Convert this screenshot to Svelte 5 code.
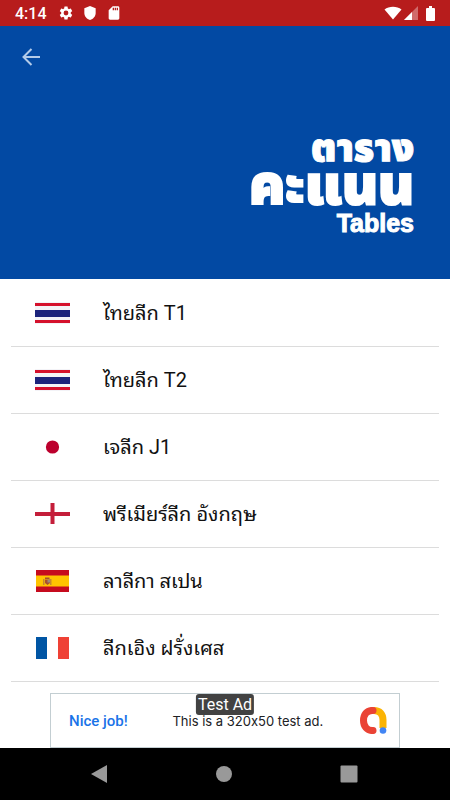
<script>
	const leagues = [
		{ name: 'ไทยลีก T1', flag: 'th' },
		{ name: 'ไทยลีก T2', flag: 'th' },
		{ name: 'เจลีก J1', flag: 'jp' },
		{ name: 'พรีเมียร์ลีก อังกฤษ', flag: 'en' },
		{ name: 'ลาลีกา สเปน', flag: 'es' },
		{ name: 'ลีกเอิง ฝรั่งเศส', flag: 'fr' }
	];
</script>

<div class="screen">
	<div class="status">
		<span class="time">4:14</span>
		<svg width="16" height="16" viewBox="0 0 24 24" fill="#fff">
			<path
				d="M19.14 12.94c.04-.3.06-.61.06-.94s-.02-.64-.07-.94l2.03-1.58a.49.49 0 0 0 .12-.61l-1.92-3.32a.49.49 0 0 0-.59-.22l-2.39.96c-.5-.38-1.03-.7-1.62-.94l-.36-2.54a.48.48 0 0 0-.48-.41h-3.84a.47.47 0 0 0-.47.41l-.36 2.54c-.59.24-1.13.57-1.62.94l-2.39-.96a.48.48 0 0 0-.59.22L2.74 8.87c-.12.21-.08.47.12.61l2.03 1.58c-.05.3-.09.63-.09.94s.02.64.07.94l-2.03 1.58a.49.49 0 0 0-.12.61l1.92 3.32c.12.22.37.29.59.22l2.39-.96c.5.38 1.03.7 1.62.94l.36 2.54c.05.24.24.41.48.41h3.84c.24 0 .44-.17.47-.41l.36-2.54c.59-.24 1.13-.56 1.62-.94l2.39.96c.22.08.47 0 .59-.22l1.92-3.32a.47.47 0 0 0-.12-.61l-2.01-1.58zM12 15.6a3.6 3.6 0 1 1 0-7.2 3.6 3.6 0 0 1 0 7.2z"
			/>
		</svg>
		<svg width="16" height="16" viewBox="0 0 24 24" fill="#fff">
			<path d="M12 1.500L3.500 5v7c0 5 3.500 9 8.500 10.500 5-1.500 8.500-5.500 8.500-10.500V5z" />
		</svg>
		<svg width="16" height="16" viewBox="0 0 24 24" fill="#fff">
			<path
				d="M18 2h-8L4 8v12c0 1.100.9 2 2 2h12c1.100 0 2-.9 2-2V4c0-1.100-.9-2-2-2zm-6 6h-2V4h2v4zm3 0h-2V4h2v4zm3 0h-2V4h2v4z"
			/>
		</svg>
		<div class="signals">
			<svg width="18" height="14" viewBox="0 0 18 14" fill="#fff">
				<path d="M9 13.500L.5 3.500C5-.3 13-.3 17.500 3.500z" />
			</svg>
			<svg width="14" height="14" viewBox="0 0 14 14" fill="#fff">
				<path d="M14 0v14H0z" opacity="0.35" />
				<path d="M8 6v8H0z" />
			</svg>
			<svg class="battery" width="9" height="15" viewBox="0 0 9 15" fill="#fff">
				<path d="M3 0h3v2h2q1 0 1 1v11q0 1-1 1H1q-1 0-1-1V3q0-1 1-1h2z" />
			</svg>
		</div>
	</div>

	<header>
		<button class="back" aria-label="Back">
			<svg width="18" height="18" viewBox="0 0 18 18" fill="none" stroke="#b3cbe9" stroke-width="2">
				<path d="M18 9H1.500M9.500 1L1.500 9l8 8" />
			</svg>
		</button>
		<h1>
			<span class="small">ตาราง</span>
			<span class="big">คะแนน</span>
			<span class="en">Tables</span>
		</h1>
	</header>

	<ul>
		{#each leagues as { name, flag }}
			<li>
				<button class="league">
					<svg class="flag" width="35" height="22" viewBox="0 0 35 22">
						{#if flag === 'th'}
							<path fill="#f3f3f7" d="M0 0h35v22H0z" />
							<path fill="#d5112c" d="M0 1h35v3H0zM0 18h35v3H0z" />
							<path fill="#1c237b" d="M0 8h35v7H0z" />
						{:else if flag === 'jp'}
							<circle cx="17.500" cy="11" r="6.600" fill="#bc002d" />
						{:else if flag === 'en'}
							<path fill="#c41e3a" d="M0 9h35v4H0zM15.500 0h4v21h-4z" />
						{:else if flag === 'es'}
							<path fill="#c60b1e" d="M1 0h33v22H1z" />
							<path fill="#ffc400" d="M1 5.500h33v11H1z" />
							<path fill="#c78a2c" d="M8 9h1.500v6H8zM15 9h1.500v6H15z" />
							<path fill="#a8502f" d="M10 7.500h4.500V9H10zM10 9.500h5v3.500l-2.500 2-2.500-2z" />
							<path fill="#9c8a7c" d="M12.500 9.500H15v3h-2.500z" />
						{:else}
							<path fill="#0055a4" d="M1 0h11v22H1z" />
							<path fill="#ef4135" d="M23 0h11v22H23z" />
						{/if}
					</svg>
					<span class="name">{name}</span>
				</button>
			</li>
		{/each}
	</ul>

	<div class="ad-slot">
		<a class="ad" href="#ad">
			<span class="cta">Nice job!</span>
			<span class="copy">This is a 320x50 test ad.</span>
			<svg width="27" height="27" viewBox="0 0 27 27" fill="none" stroke-width="7" stroke-linecap="round">
				<path stroke="#fbb404" stroke-linecap="butt" d="M14 3.500c6 0 9 3.500 9 9.500v8" />
				<path stroke="#ea4335" d="M13 3.500c-6.500-.5-9.500 4.500-9.500 10s3.500 10.500 9.500 10" />
				<circle cx="23" cy="23.500" r="3.300" fill="#4285f4" />
			</svg>
			<span class="badge">Test Ad</span>
		</a>
	</div>

	<nav>
		<button aria-label="Back">
			<svg width="18" height="18" viewBox="0 0 18 18" fill="#999"><path d="M17 0v18L1 9z" /></svg>
		</button>
		<button aria-label="Home">
			<svg width="18" height="18" viewBox="0 0 18 18" fill="#999"><circle cx="9" cy="9" r="8" /></svg>
		</button>
		<button aria-label="Recent apps">
			<svg width="18" height="18" viewBox="0 0 18 18" fill="#999">
				<rect x="0.500" y="0.500" width="17" height="17" rx="1" />
			</svg>
		</button>
	</nav>
</div>

<style>
	:global(body) {
		margin: 0;
		background: #fff;
	}
	.screen {
		display: flex;
		flex-direction: column;
		min-height: 100vh;
		font-family: Roboto, 'Noto Sans Thai', 'Noto Sans', sans-serif;
		color: #111;
	}
	svg {
		display: block;
		flex: none;
	}
	button {
		border: 0;
		padding: 0;
		background: none;
		font: inherit;
		color: inherit;
		cursor: pointer;
	}
	.status {
		display: flex;
		align-items: center;
		gap: 8px;
		height: 26px;
		padding: 0 15px;
		background: #b71c1c;
		color: #fff;
	}
	.time {
		margin-right: 3px;
		font-size: 16px;
		font-weight: 500;
	}
	.signals {
		display: flex;
		align-items: center;
		gap: 2px;
		margin-left: auto;
	}
	.battery {
		margin-left: 6px;
	}
	header {
		box-sizing: border-box;
		height: 253px;
		padding: 22px 36px 0 22px;
		background: #0249a3;
	}
	.back {
		display: block;
	}
	h1 {
		display: flex;
		flex-direction: column;
		align-items: flex-end;
		margin: 63px 0 0;
		color: #fff;
		font-weight: 900;
		-webkit-text-stroke: 1px #fff;
	}
	.small {
		font-size: 38px;
		line-height: 38px;
	}
	.big {
		font-size: 54px;
		line-height: 38px;
		-webkit-text-stroke-width: 2px;
	}
	.en {
		font-family: 'Liberation Sans', Arial, sans-serif;
		font-size: 25px;
		line-height: 36px;
	}
	ul {
		flex: 1;
		margin: 0;
		padding: 1px 11px 0;
		list-style: none;
	}
	li {
		border-bottom: 1px solid #dcdcdc;
	}
	.league {
		display: flex;
		align-items: center;
		gap: 33px;
		width: 100%;
		height: 66px;
		padding: 0 24px;
		text-align: left;
	}
	.name {
		padding-bottom: 4px;
		font-family: Roboto, 'Noto Sans Thai Looped', Loma, Garuda, Waree, 'Noto Sans Thai', sans-serif;
		font-size: 20px;
	}
	.ad-slot {
		padding: 0 50px;
	}
	.ad {
		position: relative;
		display: flex;
		align-items: center;
		justify-content: space-between;
		height: 53px;
		padding: 0 12px 0 18px;
		border: 1px solid #c3ced2;
		color: #202124;
		text-decoration: none;
	}
	.cta {
		color: #1a73e8;
		font-size: 15px;
		font-weight: 500;
	}
	.copy {
		margin-left: 8px;
		font-family: Inter, Roboto, sans-serif;
		font-size: 13px;
		/* keeps Inter from turning 320x50 into a multiplication sign */
		font-feature-settings: 'calt' 0;
	}
	.badge {
		position: absolute;
		top: 0;
		left: 50%;
		transform: translateX(-50%);
		padding: 0 2px;
		border-radius: 3px;
		background: #424242;
		color: #fff;
		font-size: 16px;
		line-height: 21px;
	}
	nav {
		display: flex;
		align-items: center;
		justify-content: space-between;
		height: 52px;
		padding: 0 92px 0 90px;
		background: #000;
	}
</style>
